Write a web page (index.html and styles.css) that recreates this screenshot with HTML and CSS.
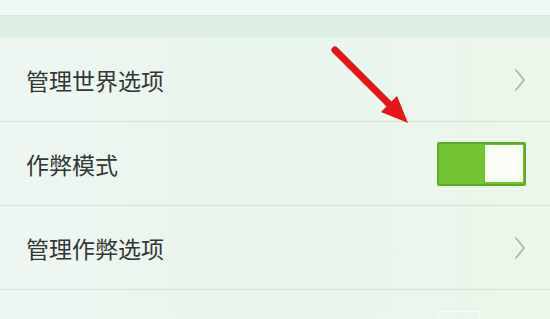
FILE: index.html
```html
<!DOCTYPE html>
<html lang="zh">
<head>
<meta charset="utf-8">
<link rel="stylesheet" href="styles.css">
</head>
<body>
<div class="page">
  <div class="top-band"></div>
  <div class="gap-band"></div>
  <div class="row">
    <span class="label">管理世界选项</span>
    <svg class="chev" width="12" height="24" viewBox="0 0 12 24"><path d="M1.5 1.5 L10 12 L1.5 22.5" fill="none" stroke="#aab0ac" stroke-width="1.7"/></svg>
  </div>
  <div class="row">
    <span class="label">作弊模式</span>
    <div class="toggle"><div class="knob"></div></div>
  </div>
  <div class="row">
    <span class="label">管理作弊选项</span>
    <svg class="chev" width="12" height="24" viewBox="0 0 12 24"><path d="M1.5 1.5 L10 12 L1.5 22.5" fill="none" stroke="#aab0ac" stroke-width="1.7"/></svg>
  </div>
  <div class="row partial">
    <div class="ghost-toggle"></div>
  </div>
  <svg class="arrow" width="550" height="319" viewBox="0 0 550 319">
    <line x1="335" y1="50" x2="392" y2="107" stroke="#e5161a" stroke-width="7" stroke-linecap="round"/>
    <polygon points="381,112 397,96 408,123" fill="#e5161a"/>
  </svg>
</div>
</body>
</html>
```
FILE: styles.css
```css
html, body {
  margin: 0;
  padding: 0;
}
body {
  width: 550px;
  height: 319px;
  overflow: hidden;
  background: #edf6ef;
  font-family: "Noto Sans CJK SC", "Noto Sans", sans-serif;
}
.page {
  position: relative;
  width: 550px;
  height: 319px;
  background: linear-gradient(90deg, #edf6f0 0%, #eaf5ee 50%, #ecf6ea 100%);
}
.top-band {
  height: 15px;
  background: #eff7f2;
  border-bottom: 1px solid #d9e6de;
}
.gap-band {
  height: 21px;
  background: #ddeee5;
  border-bottom: 1px solid #e6f0ea;
}
.row {
  height: 83px;
  border-bottom: 1px solid #d7e2db;
  display: flex;
  align-items: center;
  justify-content: space-between;
  padding: 0 24px 0 26px;
}
.label {
  font-size: 23px;
  color: #333735;
}
.toggle {
  width: 84px;
  height: 40px;
  background: #72c232;
  border: 2px solid #5ea82a;
  border-radius: 2px;
  display: flex;
  justify-content: flex-end;
  align-items: center;
  padding-right: 1px;
}
.knob {
  width: 38px;
  height: 37px;
  background: #fafcf6;
  border-radius: 1px;
}
.partial {
  border-bottom: none;
  align-items: flex-end;
  justify-content: flex-end;
  padding-right: 70px;
  height: 28px;
}
.ghost-toggle {
  width: 40px;
  height: 6px;
  border: 1px solid #f7fbf5;
  border-bottom: none;
}
.arrow {
  position: absolute;
  left: 0;
  top: 0;
}
```
